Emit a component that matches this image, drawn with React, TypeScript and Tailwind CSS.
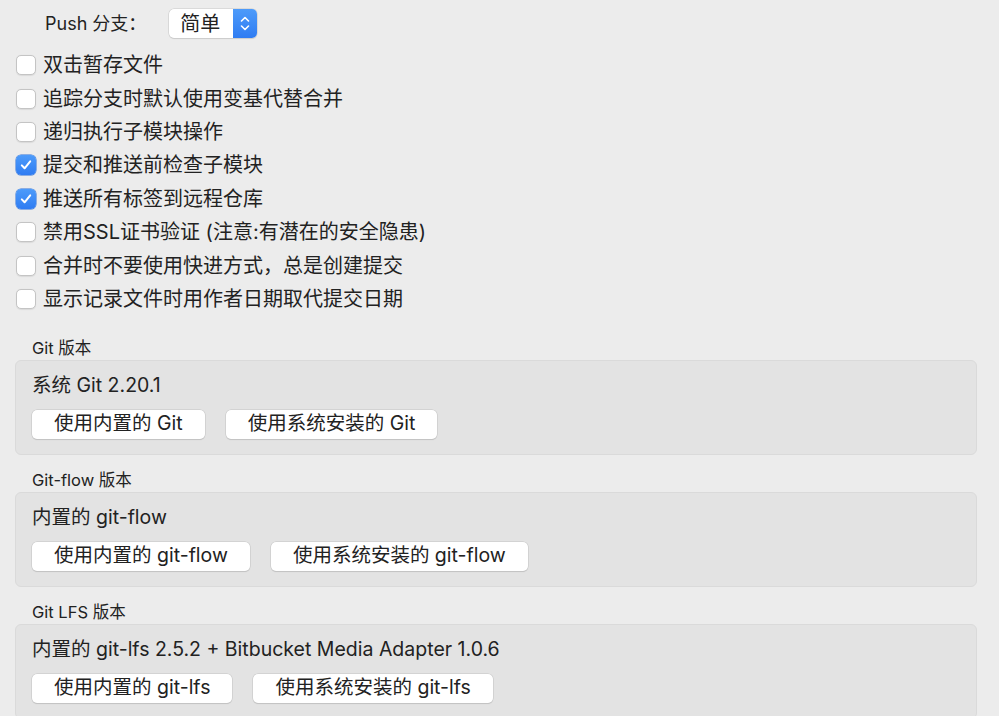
import React from "react";

const font = {
  fontFamily: '"Inter", "Noto Sans CJK SC", sans-serif',
};

const options = [
  { label: "双击暂存文件", checked: false },
  { label: "追踪分支时默认使用变基代替合并", checked: false },
  { label: "递归执行子模块操作", checked: false },
  { label: "提交和推送前检查子模块", checked: true },
  { label: "推送所有标签到远程仓库", checked: true },
  { label: "禁用SSL证书验证 (注意:有潜在的安全隐患)", checked: false },
  { label: "合并时不要使用快进方式，总是创建提交", checked: false },
  { label: "显示记录文件时用作者日期取代提交日期", checked: false },
];

const sections = [
  {
    title: "Git 版本",
    info: "系统 Git 2.20.1",
    buttons: ["使用内置的 Git", "使用系统安装的 Git"],
  },
  {
    title: "Git-flow 版本",
    info: "内置的 git-flow",
    buttons: ["使用内置的 git-flow", "使用系统安装的 git-flow"],
  },
  {
    title: "Git LFS 版本",
    info: "内置的 git-lfs 2.5.2 + Bitbucket Media Adapter 1.0.6",
    buttons: ["使用内置的 git-lfs", "使用系统安装的 git-lfs"],
  },
];

const Checkbox = ({ checked }: { checked: boolean }) =>
  checked ? (
    <span className="flex h-[20px] w-[20px] items-center justify-center rounded-[5px] bg-gradient-to-b from-[#4d9bfa] to-[#2f7cf2] shadow-[0_0_0_0.5px_#2a6fd8]">
      <svg width="14" height="14" viewBox="0 0 14 14" fill="none">
        <path
          d="M2.8 7.4 L5.6 10.3 L11.2 3.4"
          stroke="white"
          strokeWidth="2"
          strokeLinecap="round"
          strokeLinejoin="round"
        />
      </svg>
    </span>
  ) : (
    <span className="h-[20px] w-[20px] rounded-[5px] border border-[#c4c4c4] bg-white shadow-[0_0.5px_1px_rgba(0,0,0,0.08)]" />
  );

const App = () => {
  return (
    <main
      style={font}
      className="h-[716px] w-[999px] overflow-hidden bg-[#ececec] text-[#222222]"
    >
      <div className="flex h-[46px] items-center pl-[45px] pt-[1px]">
        <span className="text-[18px]">Push 分支：</span>
        <div className="ml-[23px] flex h-[29px] w-[88px] overflow-hidden rounded-[5px] bg-white shadow-[0_0_0_0.5px_#c8c8c8,0_1px_1px_rgba(0,0,0,0.12)]">
          <span className="flex flex-1 items-center justify-center pr-[2px] text-[20px]">
            简单
          </span>
          <span className="flex w-[24px] flex-col items-center justify-center gap-[3px] bg-gradient-to-b from-[#4d9bfa] to-[#2f7cf2]">
            <svg width="10" height="6" viewBox="0 0 10 6" fill="none">
              <path d="M1.5 5 L5 1.5 L8.5 5" stroke="white" strokeWidth="1.6" strokeLinecap="round" strokeLinejoin="round" />
            </svg>
            <svg width="10" height="6" viewBox="0 0 10 6" fill="none">
              <path d="M1.5 1 L5 4.5 L8.5 1" stroke="white" strokeWidth="1.6" strokeLinecap="round" strokeLinejoin="round" />
            </svg>
          </span>
        </div>
      </div>

      <div className="flex flex-col pl-[16px] pt-[2.5px]">
        {options.map((o) => (
          <label key={o.label} className="flex h-[33.4px] items-center gap-[7px]">
            <Checkbox checked={o.checked} />
            <span className="text-[20px] leading-none">{o.label}</span>
          </label>
        ))}
      </div>

      <div className="flex flex-col gap-[13px] pl-[15px] pr-[22px] pt-[20px]">
        {sections.map((s) => (
          <section key={s.title} className="flex flex-col">
            <h3 className="h-[24px] pl-[17px] text-[16.5px] leading-[24px]">{s.title}</h3>
            <div className="flex h-[95px] flex-col rounded-[6px] border border-[#dadada] bg-[#e3e3e3] px-[16px] pt-[12px]">
              <p className="text-[19.5px] leading-[24px]">{s.info}</p>
              <div className="mt-[13px] flex gap-[21px]">
                {s.buttons.map((b) => (
                  <button
                    key={b}
                    className="h-[29px] rounded-[5px] bg-white px-[22px] text-[19.5px] leading-none shadow-[0_0_0_0.5px_#c3c3c3,0_1px_1px_rgba(0,0,0,0.15)]"
                  >
                    {b}
                  </button>
                ))}
              </div>
            </div>
          </section>
        ))}
      </div>
    </main>
  );
};

export default App;
